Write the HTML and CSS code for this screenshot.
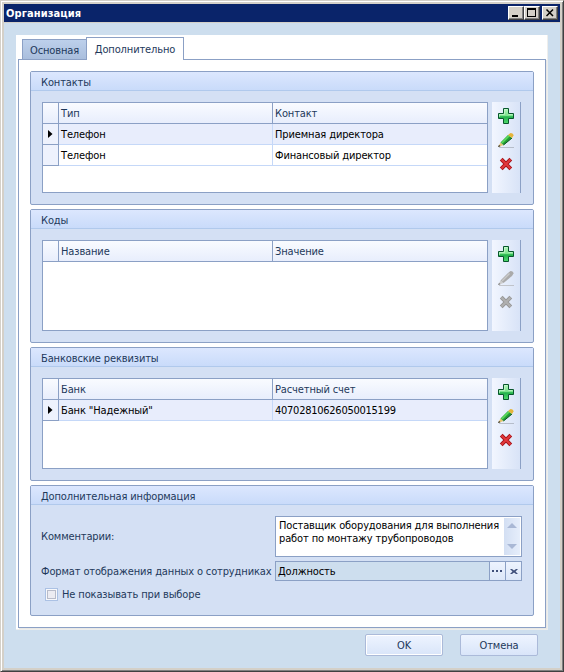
FILE: index.html
```html
<!DOCTYPE html>
<html lang="ru">
<head>
<meta charset="utf-8">
<title>Организация</title>
<link rel="stylesheet" href="styles.css">
</head>
<body>
<svg width="0" height="0" class="defs">
  <defs>
    <linearGradient id="g" x2="0" y2="1"><stop offset="0" stop-color="#b5f5bd"/><stop offset=".48" stop-color="#7be48c"/><stop offset=".55" stop-color="#22b04a"/><stop offset="1" stop-color="#50db6d"/></linearGradient>
    <symbol id="plus" viewBox="0 0 16 16"><path d="M5.500 .5h5v5h5v5h-5v5h-5v-5h-5v-5h5z" fill="url(#g)" stroke="#08572c" stroke-linejoin="round"/><path d="M1.500 9V6.500h5v-5H9M10.500 6.500h4" fill="none" stroke="#d4fad8" stroke-opacity=".6"/></symbol>
    <symbol id="pencil" viewBox="0 0 16 16"><path d="M1 15.500h15" stroke="#8c919b" stroke-opacity=".5"/><path d="M0 15 2.500 10.500 5.500 13z" fill="#e6c56d"/><path d="M0 15l1-2 1.500 1.300z" fill="#222"/><path d="M2.500 10.500 10 3l4 3-8.500 7z" fill="#219a37"/><path d="M3 10.500 10.500 3l1.500 1L4.500 11.500z" fill="#5bda59"/><path d="M5.500 13l8.500-7" stroke="#09541f"/><path d="M10 3 12.500 1Q15.500 1 15.500 3.500L14 6z" fill="#e5b53c"/></symbol>
    <symbol id="pencil-off" viewBox="0 0 16 16"><path d="M1 15.500h15" stroke="#aaa" stroke-opacity=".6"/><path d="M0 15 2.500 10.500 5.500 13z" fill="#ccc"/><path d="M0 15l1-2 1.500 1.300z" fill="#777"/><path d="M2.500 10.500 10 3 12.500 1Q15.500 1 15.500 3.500L14 6 5.500 13z" fill="#aaa"/><path d="M3.500 10.500 11 3l1 1L4.500 11.500z" fill="#c9c9c9"/></symbol>
    <symbol id="cross" viewBox="0 0 16 16"><path d="M3.200 3.200 12.800 12.800M12.800 3.200 3.200 12.800" stroke="#a51218" stroke-width="3.900"/><path d="M3.500 3.500 12.500 12.500M12.500 3.500 3.500 12.500" stroke="#e2393c" stroke-width="2"/></symbol>
    <symbol id="cross-off" viewBox="0 0 16 16"><path d="M3.200 3.200 12.800 12.800M12.800 3.200 3.200 12.800" stroke="#969696" stroke-width="3.900"/><path d="M3.500 3.500 12.500 12.500M12.500 3.500 3.500 12.500" stroke="#b0b0b0" stroke-width="2"/></symbol>
  </defs>
</svg>
<div class="window">
  <header class="titlebar">
    <h1>Организация</h1>
    <span class="wbtn"><svg width="14" height="12"><path d="M3 8h6v2H3z"/></svg></span>
    <span class="wbtn"><svg width="14" height="12"><path d="M2 1h9v9H2zM3 3v6h7V3z" fill-rule="evenodd"/></svg></span>
    <span class="wbtn close"><svg width="14" height="12"><path d="M3.500 2.500l6.500 6.500M10 2.500l-6.500 6.500" stroke="#000" stroke-width="1.500"/></svg></span>
  </header>
  <main class="client">
    <div class="tabs">
      <nav class="tabbar"><span class="tab">Основная</span><span class="tab active">Дополнительно</span></nav>
      <div class="page">
        <section class="group">
          <h2>Контакты</h2>
          <div class="body">
            <div class="grid">
              <div class="row head"><i></i><span>Тип</span><span>Контакт</span></div>
              <div class="row selected"><i><svg width="5" height="8"><path d="M0 0 4.500 4 0 8z"/></svg></i><span>Телефон</span><span>Приемная директора</span></div>
              <div class="row"><i></i><span>Телефон</span><span>Финансовый директор</span></div>
            </div>
            <div class="tools"><svg><use href="#plus"/></svg><svg><use href="#pencil"/></svg><svg><use href="#cross"/></svg></div>
          </div>
        </section>
        <section class="group">
          <h2>Коды</h2>
          <div class="body">
            <div class="grid">
              <div class="row head"><i></i><span>Название</span><span>Значение</span></div>
            </div>
            <div class="tools"><svg><use href="#plus"/></svg><svg><use href="#pencil-off"/></svg><svg><use href="#cross-off"/></svg></div>
          </div>
        </section>
        <section class="group">
          <h2>Банковские реквизиты</h2>
          <div class="body">
            <div class="grid">
              <div class="row head"><i></i><span>Банк</span><span>Расчетный счет</span></div>
              <div class="row selected"><i><svg width="5" height="8"><path d="M0 0 4.500 4 0 8z"/></svg></i><span>Банк "Надежный"</span><span class="num">40702810626050015199</span></div>
            </div>
            <div class="tools"><svg><use href="#plus"/></svg><svg><use href="#pencil"/></svg><svg><use href="#cross"/></svg></div>
          </div>
        </section>
        <section class="group info">
          <h2>Дополнительная информация</h2>
          <div class="form">
            <label>Комментарии:</label>
            <div class="memo"><p>Поставщик оборудования для выполнения<br>работ по монтажу трубопроводов</p>
              <div class="scroll"><svg width="10" height="5"><path d="M0 5 5 0l5 5z"/></svg><svg width="10" height="5"><path d="M0 0l5 5 5-5z"/></svg></div></div>
            <label>Формат отображения данных о сотрудниках</label>
            <div class="field"><span>Должность</span><b><svg width="11" height="2"><path d="M0 0h2v2H0zM4 0h2v2H4zM8 0h2v2H8z"/></svg></b><b><svg width="8" height="5"><path d="M0 0h2l2 1.500L6 0h2L5.500 2.500 8 5H6L4 3.500 2 5H0l2.500-2.500z"/></svg></b></div>
          </div>
          <label class="check"><span class="box"></span>Не показывать при выборе</label>
        </section>
      </div>
    </div>
    <footer><button class="default">OK</button><button>Отмена</button></footer>
  </main>
</div>
</body>
</html>
```
FILE: styles.css
```css
* { box-sizing: border-box; }
body { margin: 0; font: 11px/13px "DejaVu Sans Condensed", "DejaVu Sans", sans-serif; font-stretch: condensed; color: #1e395b; letter-spacing: -0.13px; }
.defs { position: absolute; }
h1, h2, p { margin: 0; font-weight: normal; font-size: 11px; }
svg { display: block; }
.window { width: 564px; height: 672px; border: 1px solid; border-color: #d4d0c8 #404040 #404040 #d4d0c8; background: #d4d0c8; box-shadow: inset 1px 1px #fff, inset -1px -1px #808080; padding: 3px; }
.titlebar { height: 18px; background: #0a246a; color: #fff; display: flex; align-items: center; padding: 0 2px; }
.titlebar h1 { flex: 1; font-weight: bold; letter-spacing: 0.1px; }
.wbtn { width: 16px; height: 14px; background: #d4d0c8; border: 1px solid; border-color: #fff #404040 #404040 #fff; box-shadow: inset -1px -1px #808080; }
.wbtn.close { margin-left: 2px; }
.client { margin-top: 1px; height: 645px; background: #cddeee; padding: 12px 12px 0; }
.tabs { height: 595px; width: 532px; background: #fff; padding: 2px; box-shadow: inset -1px -1px #eeeeec; }
.tabbar { display: flex; align-items: flex-end; height: 23px; padding-left: 4px; position: relative; margin-bottom: -1px; }
.tab { width: 65px; height: 20px; margin-bottom: 1px; border: 1px solid #8ba0c5; border-bottom: 0; background: linear-gradient(#bdd0eb, #a9bedd); text-align: center; line-height: 21px; }
.tab.active { width: 98px; height: 23px; margin-left: -1px; margin-bottom: 0; background: #fff; line-height: 24px; }
.page { width: 528px; height: 569px; border: 1px solid #8ba0c5; padding: 11px; display: flex; flex-direction: column; gap: 4px; box-shadow: 1px 1px #e8e8e6; }
.group { width: 504px; height: 134px; border: 1px solid #8ba0c5; border-radius: 2px; background: #d4e0f4; }
.group.info { height: 131px; }
h2 { height: 19px; line-height: 21px; padding-left: 10px; background: linear-gradient(#dce7fe, #c9dbfa); border-bottom: 1px solid #b0c9ec; }
.body { display: flex; gap: 4px; padding: 11px; }
.grid { width: 446px; height: 91px; border: 1px solid #8ba0c5; background: #fff; }
.row { display: grid; grid-template-columns: 16px 214px 1fr; height: 21px; color: #000; }
.row i { height: 21px; display: flex; align-items: center; justify-content: center; border-right: 1px solid #8ba0c5; border-bottom: 1px solid #8ba0c5; background: #eef2fd; }
.row span { height: 21px; line-height: 22px; padding-left: 2px; border-bottom: 1px solid #c5d8f8; border-right: 1px solid #c5d8f8; }
.row .num { letter-spacing: -0.26px; }
.head { color: #1e395b; background: linear-gradient(#f9fbff, #e7edfc); }
.head i { background: none; }
.row.head span { border-color: #8ba0c5; }
.row span:last-child { border-right: 0; }
.selected { background: #e8edfc; }
.tools { width: 29px; height: 91px; background: linear-gradient(90deg, #f2f6ff, #d8e3f7); border-right: 1px solid #8ba0c5; padding: 6px 0 0 6px; display: flex; flex-direction: column; gap: 8px; }
.tools svg { width: 16px; height: 16px; }
.form { display: grid; grid-template-columns: 234px 247px; grid-template-rows: 41px 20px; row-gap: 4px; padding: 11px 0 0 10px; align-items: center; }
.memo { height: 41px; border: 1px solid #8ba0c5; background: #fff; color: #000; display: flex; justify-content: space-between; padding: 1px; }
.memo p { padding: 1px 0 0 2px; white-space: nowrap; }
.scroll { width: 16px; height: 37px; flex: none; background: linear-gradient(90deg, #d3dff3, #e6eefb); display: flex; flex-direction: column; justify-content: space-between; align-items: center; padding: 5px 0 6px; fill: #a9b8d5; }
.field { height: 20px; border: 1px solid #8ba0c5; display: flex; background: #cddeee; color: #000; line-height: 19px; }
.field span { flex: 1; padding-left: 2px; }
.field b { width: 16px; border-left: 1px solid #8ba0c5; background: linear-gradient(#edf3fe, #dce7f8); display: flex; align-items: center; justify-content: center; fill: #3f4f7a; }
.check { display: flex; align-items: center; gap: 4px; margin: 6px 0 0 14px; height: 15px; }
.box { width: 13px; height: 13px; border: 1px solid #abc1e4; background: #ececf2; box-shadow: inset 0 0 0 1px #f7f8fb, inset 0 0 0 2px #b8bcca; }
footer { display: flex; gap: 17px; margin: 4px 0 0 349px; }
button { width: 78px; height: 22px; padding: 0; border: 1px solid #abbad9; border-radius: 2px; background: linear-gradient(#eef4ff, #d9e5f9); color: #1e395b; font: inherit; letter-spacing: inherit; }
button.default { box-shadow: inset 0 0 0 1px #fff; }
```
